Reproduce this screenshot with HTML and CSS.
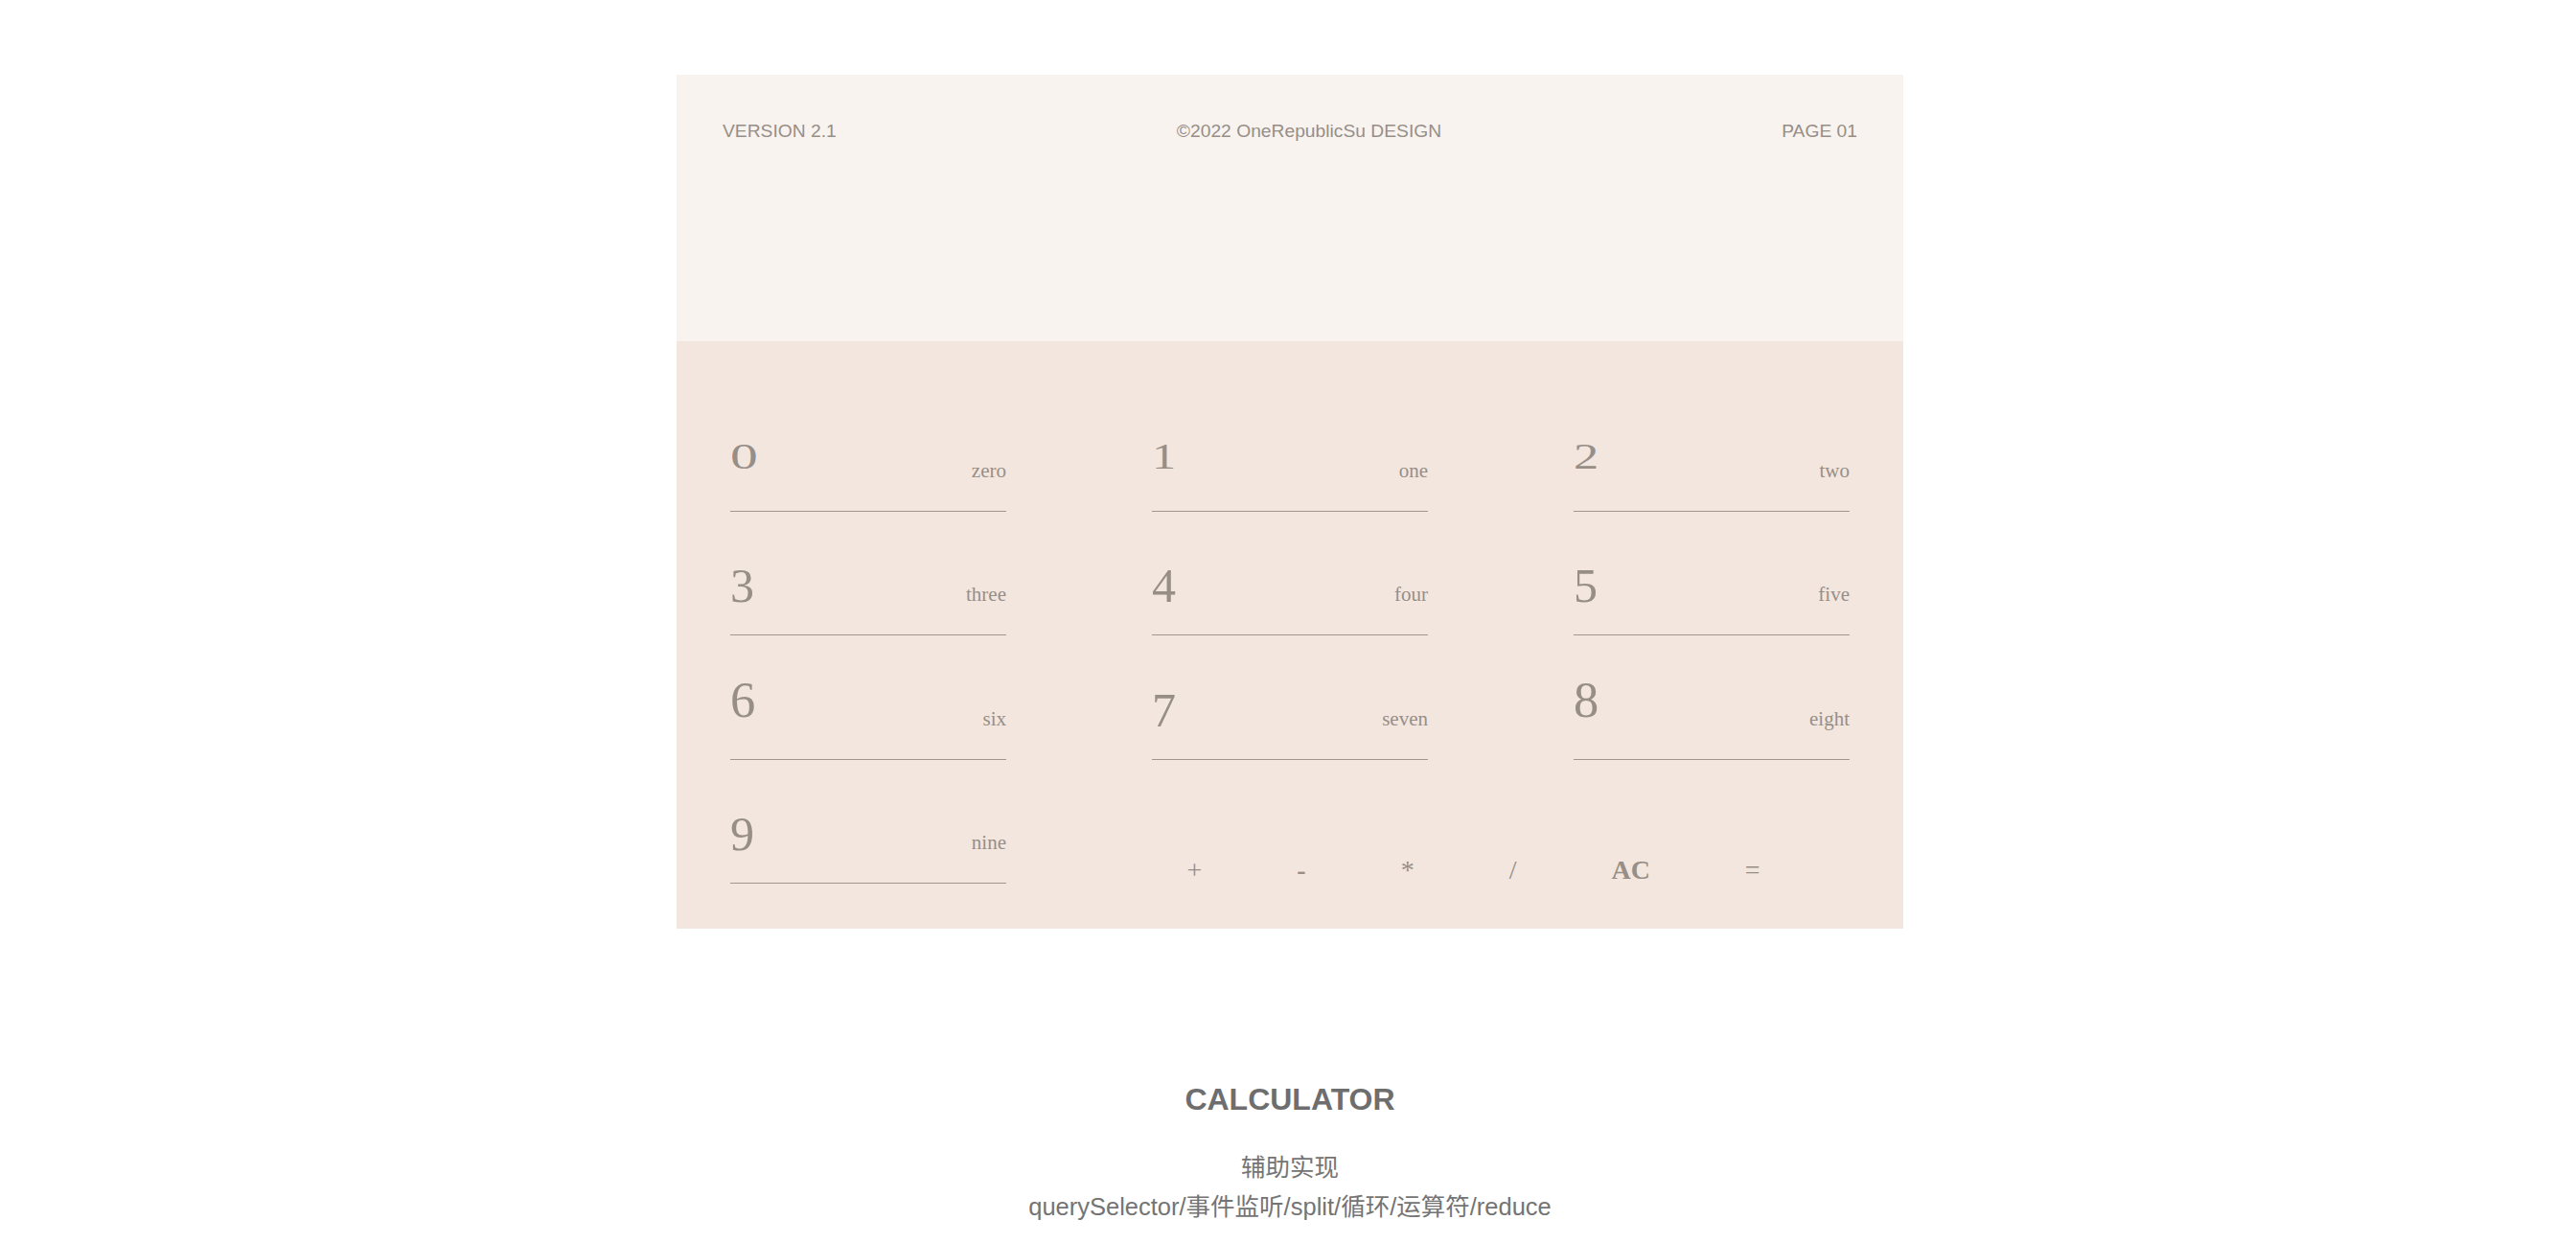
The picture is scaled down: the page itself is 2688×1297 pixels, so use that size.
FILE: index.html
```html
<!DOCTYPE html>
<html lang="zh-CN">
<head>
<meta charset="utf-8">
<title>Calculator</title>
<link rel="stylesheet" href="styles.css">
</head>
<body>
<main class="calc">
  <header class="calc-top">
    <span class="meta">VERSION 2.1</span>
    <span class="meta">©2022 OneRepublicSu DESIGN</span>
    <span class="meta">PAGE 01</span>
  </header>
  <section class="calc-keys">
    <div class="key"><span class="digit d-x d-w">0</span><span class="word">zero</span></div>
    <div class="key"><span class="digit d-x">1</span><span class="word">one</span></div>
    <div class="key"><span class="digit d-x d-t">2</span><span class="word">two</span></div>
    <div class="key"><span class="digit d-d">3</span><span class="word">three</span></div>
    <div class="key"><span class="digit d-d">4</span><span class="word">four</span></div>
    <div class="key"><span class="digit d-d">5</span><span class="word">five</span></div>
    <div class="key"><span class="digit d-a">6</span><span class="word">six</span></div>
    <div class="key"><span class="digit d-d">7</span><span class="word">seven</span></div>
    <div class="key"><span class="digit d-a">8</span><span class="word">eight</span></div>
    <div class="key"><span class="digit d-d">9</span><span class="word">nine</span></div>
    <div class="ops">
      <span class="op">+</span>
      <span class="op op-minus">-</span>
      <span class="op">*</span>
      <span class="op">/</span>
      <span class="op op-ac">AC</span>
      <span class="op">=</span>
    </div>
  </section>
</main>
<footer class="info">
  <h1 class="info-title">CALCULATOR</h1>
  <p class="info-text">辅助实现<br>querySelector/事件监听/split/循环/运算符/reduce</p>
</footer>
</body>
</html>
```
FILE: styles.css
```css
html, body {
  background: #ffffff;
}
body {
  margin: 8px 8px 8px 12px;
  font-family: "Liberation Sans", "Noto Sans CJK SC", sans-serif;
}
.calc {
  width: 1280px;
  margin: 70px auto 0;
}
.calc-top {
  box-sizing: border-box;
  height: 278px;
  background: #f8f3ef;
  padding: 47px 48px 0 48px;
  display: flex;
  justify-content: space-between;
  align-items: flex-start;
  font-size: 19.25px;
  line-height: 24px;
  color: #978e87;
}
.calc-keys {
  background: #f3e6df;
  padding: 91px 56px 47.5px;
  display: grid;
  grid-template-columns: repeat(3, 288px);
  column-gap: 152px;
  row-gap: 42.33px;
}
.key {
  display: flex;
  justify-content: space-between;
  align-items: baseline;
  padding-bottom: 36px;
  border-bottom: 1px solid #a1978f;
  font-family: "Liberation Serif", serif;
  color: #978f87;
}
.digit {
  display: block;
  font-size: 50px;
  line-height: 50px;
  transform-origin: 0 42px;
}
.d-x {
  transform: scale(1, 0.74);
}
.d-x.d-w {
  transform: scale(1.15, 0.74);
}
.d-x.d-t {
  transform: scale(1.05, 0.76);
}
.d-d {
  transform: translateY(10px);
}
.d-a {
  transform: scale(1.05);
}
.word {
  display: block;
  font-size: 21px;
  line-height: 21px;
  transform: translateY(8.5px);
}
.ops {
  grid-column: 2 / 4;
  align-self: end;
  display: flex;
  align-items: baseline;
  margin-left: -13px;
  font-family: "Liberation Serif", serif;
  font-size: 28px;
  line-height: 28px;
  color: #978f87;
}
.op {
  padding: 0 49.5px;
}
.op-minus {
  font-weight: bold;
}
.op-ac {
  font-weight: bold;
}
.info {
  text-align: center;
  margin-top: 158px;
}
.info-title {
  margin: 0;
  font-size: 32px;
  line-height: 40px;
  font-weight: bold;
  color: #6e6e6e;
}
.info-text {
  margin: 31px 0 0;
  font-size: 25.5px;
  line-height: 41px;
  color: #747474;
}
```
